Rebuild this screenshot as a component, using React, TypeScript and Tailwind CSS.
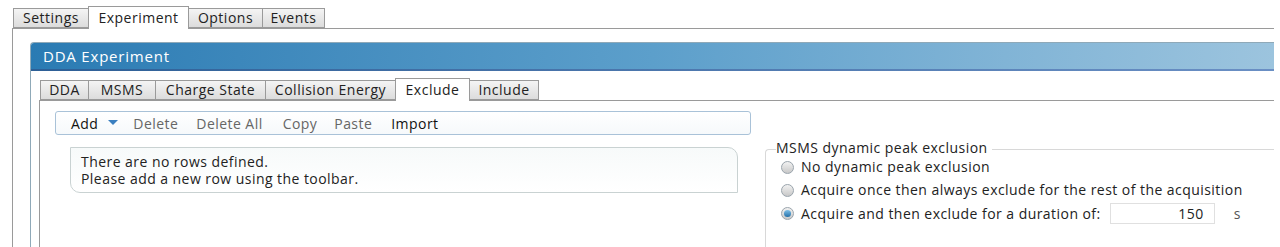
import React from "react";

const font = { fontFamily: '"Open Sans", "Noto Sans", sans-serif' };

function Tab({ label, active, w }: { label: string; active?: boolean; w: string }) {
  return (
    <div
      className={`${w} flex items-center justify-center border border-[#9a9a9a] -ml-px first:ml-0 ${
        active
          ? "relative z-10 h-[23px] border-b-0 bg-white -mb-px"
          : "h-[20px] bg-gradient-to-b from-[#f4f4f4] to-[#dcdcdc]"
      }`}
    >
      <span className="text-[14px] leading-none tracking-[0.5px] text-[#222]">{label}</span>
    </div>
  );
}

function Radio({ checked }: { checked?: boolean }) {
  return (
    <span className="flex h-[13px] w-[13px] shrink-0 items-center justify-center rounded-full border border-[#9aa4ac] bg-gradient-to-b from-[#f2f2f2] to-[#c8c8c8]">
      {checked && (
        <span className="h-[7px] w-[7px] rounded-full bg-gradient-to-b from-[#7ec0e8] to-[#1f6fa8]" />
      )}
    </span>
  );
}

export default function App() {
  return (
    <div className="h-[247px] w-[1280px] overflow-hidden bg-white pt-[6px] text-[#222]" style={font}>
      {/* outer tabs */}
      <div className="flex items-end pl-[13px]">
        <Tab label="Settings" w="w-[76px]" />
        <Tab label="Experiment" active w="w-[101px]" />
        <Tab label="Options" w="w-[75px]" />
        <Tab label="Events" w="w-[63px]" />
      </div>

      {/* outer pane */}
      <div className="ml-[12px] h-[240px] w-[1262px] border-l border-t border-[#9a9a9a] pl-[17px] pt-[13px]">
        <div className="h-full overflow-hidden rounded-tl-[4px] border-l border-t border-[#8fa9b8]">
          <div className="flex h-[26px] items-center bg-gradient-to-r from-[#2a7bb3] via-[#5c9fcb] to-[#9cc4de] pl-[12px]">
            <span className="text-[15px] tracking-[0.8px] text-white">DDA Experiment</span>
          </div>
          <div className="h-[2px] bg-gradient-to-r from-[#2d5f96] to-[#6a8fc4]" />

          <div className="pl-[8px] pt-[7px]">
            {/* inner tabs */}
            <div className="flex items-end pl-px">
              <Tab label="DDA" w="w-[49px]" />
              <Tab label="MSMS" w="w-[68px]" />
              <Tab label="Charge State" w="w-[111px]" />
              <Tab label="Collision Energy" w="w-[131px]" />
              <Tab label="Exclude" active w="w-[75px]" />
              <Tab label="Include" w="w-[70px]" />
            </div>

            <div className="flex h-[160px] border-l border-t border-[#9a9a9a] text-[14px] tracking-[0.45px]">
              <div className="w-[712px] shrink-0 pl-[15px] pt-[10px]">
                <div className="flex h-[24px] w-[696px] items-center rounded-[3px] border border-[#a9c2d8] bg-gradient-to-b from-white to-[#f6f9fb] pl-[15px]">
                  <span className="text-[#111]">Add</span>
                  <svg className="ml-[10px] mr-[15px]" width="10" height="6" viewBox="0 0 10 6">
                    <path d="M0 0 L10 0 L5 5 Z" fill="#3a7fc0" />
                  </svg>
                  <span className="text-[#666]">Delete</span>
                  <span className="ml-[18px] text-[#666]">Delete All</span>
                  <span className="ml-[20px] text-[#666]">Copy</span>
                  <span className="ml-[17px] text-[#666]">Paste</span>
                  <span className="ml-[19px] text-[#111]">Import</span>
                </div>

                <div className="ml-[15px] mt-[12px] flex h-[46px] w-[668px] flex-col justify-center rounded-tr-[10px] rounded-bl-[10px] border border-[#c9d2d2] bg-gradient-to-b from-[#f7fafa] to-white pl-[10px] leading-[17px] text-[#222]">
                  <span>There are no rows defined.</span>
                  <span>Please add a new row using the toolbar.</span>
                </div>
              </div>

              {/* group box */}
              <div className="ml-[13px] mt-[48px] flex-1 rounded-tl-[4px] border-l border-t border-[#d8d8d8] pl-[10px]">
                <div className="-mt-[10px] flex flex-col leading-[16px]">
                  <span className="w-fit bg-white pr-[4px] text-[#222]">MSMS dynamic peak exclusion</span>
                  <label className="ml-[5px] mt-[3px] flex items-center gap-[7px]">
                    <Radio />
                    <span>No dynamic peak exclusion</span>
                  </label>
                  <label className="ml-[5px] mt-[7px] flex items-center gap-[7px]">
                    <Radio />
                    <span>Acquire once then always exclude for the rest of the acquisition</span>
                  </label>
                  <label className="ml-[5px] mt-[5px] flex items-center gap-[7px]">
                    <Radio checked />
                    <span>Acquire and then exclude for a duration of:</span>
                    <span className="ml-[2px] flex h-[21px] w-[105px] items-center justify-end border border-[#e0e0e0] pr-[10px]">150</span>
                    <span className="ml-[12px] text-[#555]">s</span>
                  </label>
                </div>
              </div>
            </div>
          </div>
        </div>
      </div>
    </div>
  );
}
